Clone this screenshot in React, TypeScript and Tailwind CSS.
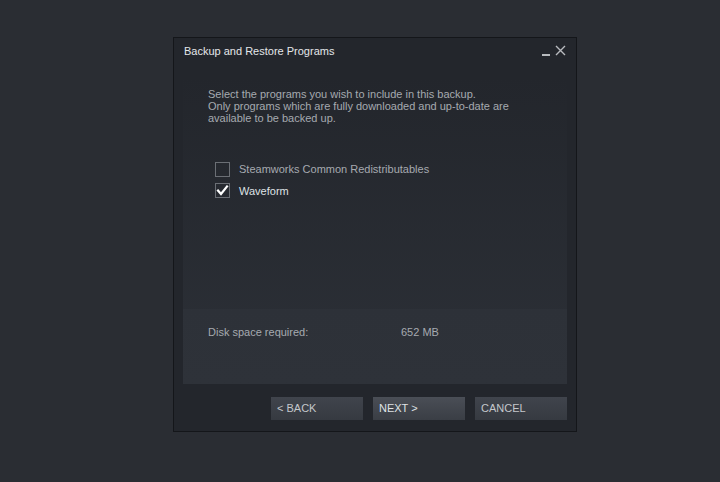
import { useState } from 'react';

type Program = {
    id: number;
    name: string;
    checked: boolean;
};

const initialPrograms: Program[] = [
    { id: 1, name: 'Steamworks Common Redistributables', checked: false },
    { id: 2, name: 'Waveform', checked: true },
];

const CheckBox = ({ checked }: { checked: boolean }) => (
    <span className="w-[15px] h-[15px] border border-[#6b6f75] flex items-center justify-center shrink-0">
        {checked && (
            <svg width="13" height="13" viewBox="0 0 13 13">
                <path d="M2 6.5 L5 10 L11 2.5" fill="none" stroke="#ffffff" strokeWidth="2.2" strokeLinecap="square" />
            </svg>
        )}
    </span>
);

const App = () => {
    const [programs, setPrograms] = useState(initialPrograms);

    const toggle = (id: number) => {
        setPrograms(programs.map(p => (p.id === id ? { ...p, checked: !p.checked } : p)));
    };

    return (
        <div className="w-[720px] h-[482px] bg-[#2a2d33] pt-[37px] pl-[173px] font-['Liberation_Sans',Arial,sans-serif]">
            <div className="w-[404px] h-[395px] bg-[#23262c] border border-[#14161a] flex flex-col">
                {/* Title bar */}
                <div className="h-[26px] flex items-start justify-between pt-[7px] pl-[10px] pr-[10px]">
                    <span className="text-[11px] text-[#e4e7ea] leading-[13px]">Backup and Restore Programs</span>
                    <div className="flex items-end gap-[5px] h-[12px] -mt-[1px]">
                        <span className="w-[8px] h-[2px] bg-[#b8bbbf]" />
                        <svg width="11" height="11" viewBox="0 0 11 11">
                            <path d="M1 1 L10 10 M10 1 L1 10" stroke="#b8bbbf" strokeWidth="1.4" />
                        </svg>
                    </div>
                </div>

                {/* Content panel */}
                <div className="mt-[13px] mx-[9px] h-[307px] flex flex-col bg-gradient-to-b from-[#23262c] to-[#2c3037]">
                    <p className="pt-[11px] pl-[25px] text-[11px] leading-[12px] text-[#a6aab0]">
                        Select the programs you wish to include in this backup.
                        <br />
                        Only programs which are fully downloaded and up-to-date are
                        <br />
                        available to be backed up.
                    </p>

                    <div className="mt-[37px] pl-[32px] flex flex-col gap-[5px]">
                        {programs.map(p => (
                            <button
                                key={p.id}
                                onClick={() => toggle(p.id)}
                                className="flex items-center gap-[9px] text-left"
                            >
                                <CheckBox checked={p.checked} />
                                <span className={`text-[11px] ${p.checked ? 'text-[#dfe2e5]' : 'text-[#a6aab0]'}`}>{p.name}</span>
                            </button>
                        ))}
                    </div>

                    <div className="mt-auto h-[75px] bg-gradient-to-b from-[#2d3138] to-[#2e3239] pl-[25px] pt-[15px] flex text-[11px] text-[#a6aab0]">
                        <span className="w-[193px]">Disk space required:</span>
                        <span>652 MB</span>
                    </div>
                </div>

                {/* Buttons */}
                <div className="mt-[13px] pr-[9px] flex justify-end gap-[10px]">
                    <button className="w-[92px] h-[23px] bg-gradient-to-b from-[#40444c] to-[#363a41] text-left pl-[6px] text-[11px] text-[#c4c7cb]">
                        &lt; BACK
                    </button>
                    <button className="w-[92px] h-[23px] bg-gradient-to-b from-[#4a4e56] to-[#3a3e45] text-left pl-[6px] text-[11px] text-[#dfe2e5]">
                        NEXT &gt;
                    </button>
                    <button className="w-[92px] h-[23px] bg-gradient-to-b from-[#40444c] to-[#363a41] text-left pl-[6px] text-[11px] text-[#c4c7cb]">
                        CANCEL
                    </button>
                </div>
            </div>
        </div>
    );
};

export default App;
